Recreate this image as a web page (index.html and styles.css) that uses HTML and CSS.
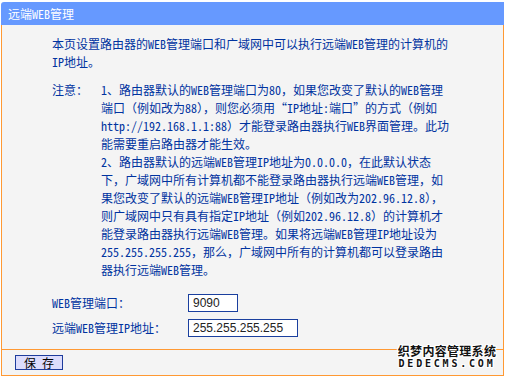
FILE: index.html
```html
<!DOCTYPE html>
<html lang="zh-CN">
<head>
    <meta charset="UTF-8">
    <meta name="viewport" content="width=device-width, initial-scale=1.0">
    <title>远端WEB管理</title>
    <link rel="stylesheet" href="styles.css">
</head>
<body>

    <div class="panel">
        <div class="panel-title">远端WEB管理</div>

        <div class="panel-body">
            <p class="intro">本页设置路由器的WEB管理端口和广域网中可以执行远端WEB管理的计算机的IP地址。</p>

            <div class="notes">
                <div class="notes-label">注意：</div>
                <div class="notes-text">
                    <p>1、路由器默认的WEB管理端口为80，如果您改变了默认的WEB管理端口（例如改为88），则您必须用“IP地址:端口”的方式（例如http://192.168.1.1:88）才能登录路由器执行WEB界面管理。此功能需要重启路由器才能生效。</p>
                    <p>2、路由器默认的远端WEB管理IP地址为0.0.0.0，在此默认状态下，广域网中所有计算机都不能登录路由器执行远端WEB管理，如果您改变了默认的远端WEB管理IP地址（例如改为202.96.12.8），则广域网中只有具有指定IP地址（例如202.96.12.8）的计算机才能登录路由器执行远端WEB管理。如果将远端WEB管理IP地址设为255.255.255.255，那么，广域网中所有的计算机都可以登录路由器执行远端WEB管理。</p>
                </div>
            </div>

            <form class="settings" id="remoteForm">
                <label for="port">WEB管理端口：</label>
                <input type="text" id="port" class="field field-short" value="9090">

                <label for="remoteIp">远端WEB管理IP地址：</label>
                <input type="text" id="remoteIp" class="field field-long" value="255.255.255.255">
            </form>
        </div>

        <div class="panel-footer">
            <button type="submit" form="remoteForm" class="save-btn">保 存</button>
        </div>
    </div>

    <!-- 水印 -->
    <div class="watermark">
        <span class="wm-cn">织梦内容管理系统</span>
        <span class="wm-en">DEDECMS.COM</span>
    </div>

</body>
</html>
```

FILE: styles.css
```css
body {
    margin: 0;
    padding-top: 2px;
    background: #fff;
    font-family: "Noto Sans Mono CJK SC", "Noto Sans CJK SC", monospace;
    font-size: 12px;
    line-height: 18px;
    color: #0033a0;
    position: relative;
}
p {
    margin: 0;
}
.panel {
    width: 503px;
    margin-left: 1px;
}
.panel-title {
    height: 23px;
    line-height: 23px;
    padding-left: 7px;
    background: #6699ff;
    color: #fff;
    border-top-left-radius: 3px;
}
.panel-body {
    background: #f4f4f4;
    border-left: 1px solid #ff9933;
    border-right: 1px solid #ff9933;
    border-bottom: 1px solid #ff9933;
    padding: 10px 0 9px 50px;
}
.intro {
    width: 400px;
    margin-bottom: 10px;
}
.notes {
    display: flex;
    margin-bottom: 11px;
}
.notes-label {
    width: 49px;
    flex-shrink: 0;
}
.notes-text {
    width: 352px;
}
.settings {
    display: grid;
    grid-template-columns: 136px auto;
    grid-auto-rows: 25px;
    align-items: center;
    justify-items: start;
}
.field {
    box-sizing: border-box;
    height: 18px;
    padding: 0 4px;
    border: 1px solid #1a3f9e;
    background: #fff;
    font-family: "Liberation Sans", Arial, sans-serif;
    font-size: 12px;
    color: #222;
}
.field-short {
    width: 50px;
}
.field-long {
    width: 110px;
}
.panel-footer {
    height: 25px;
    background: #f4f4f4;
    border-left: 1px solid #ff9933;
    border-right: 1px solid #ff9933;
    border-bottom: 1px solid #ff9933;
    padding-left: 13px;
    display: flex;
    align-items: center;
}
.save-btn {
    width: 48px;
    height: 15px;
    padding: 0;
    border: 1px solid #1e3c9c;
    background: #dcdcfc;
    font-family: "Noto Sans Mono CJK SC", "Noto Sans CJK SC", monospace;
    font-size: 12px;
    line-height: 13px;
    white-space: pre;
    color: #000;
    cursor: pointer;
}
.watermark {
    position: absolute;
    left: 396px;
    top: 344px;
    width: 102px;
    display: flex;
    flex-direction: column;
    align-items: center;
    gap: 1px;
    font-weight: bold;
    color: #111;
    text-shadow: 1px 0 #fff, -1px 0 #fff, 0 1px #fff, 0 -1px #fff, 1px 1px #fff, -1px -1px #fff, 1px -1px #fff, -1px 1px #fff;
}
.wm-cn {
    font-family: "Noto Sans CJK SC", sans-serif;
    font-size: 12px;
    line-height: 13px;
    letter-spacing: 0.3px;
}
.wm-en {
    font-family: "DejaVu Sans Mono", monospace;
    font-size: 10px;
    line-height: 11px;
    letter-spacing: 2.8px;
}
```
